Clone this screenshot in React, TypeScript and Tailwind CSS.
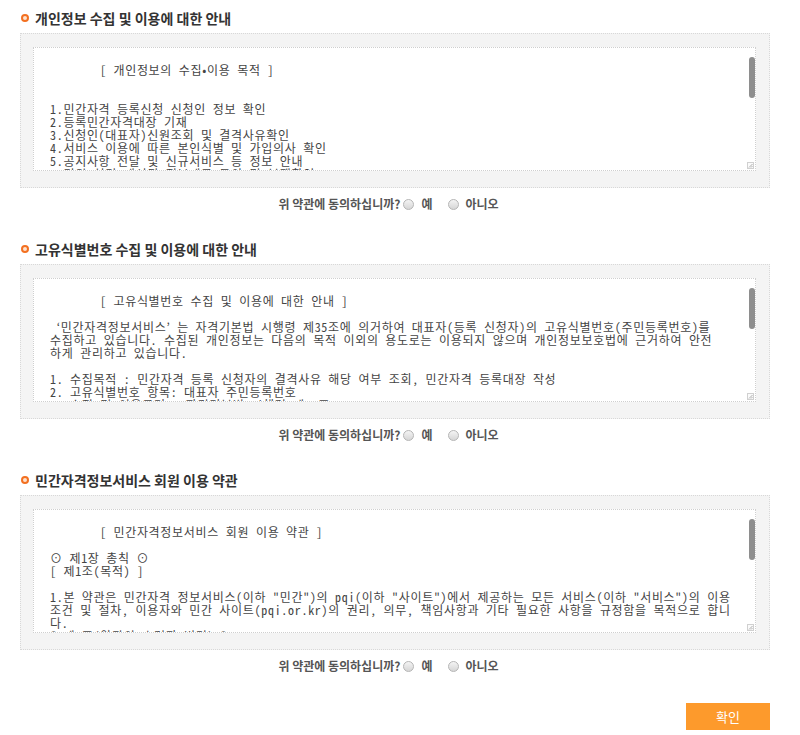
import React from "react";

const mono = {
  fontFamily: '"Noto Sans Mono CJK KR", "Noto Sans CJK KR", monospace',
};

function Bullet() {
  return (
    <span className="inline-block w-[8px] h-[8px] rounded-full border-[2px] border-[#f37021] bg-[#fde3d0] mr-[6px] shrink-0" />
  );
}

function Radio() {
  return (
    <span className="inline-block w-[11px] h-[11px] rounded-full border border-[#b5b5b5] bg-gradient-to-b from-[#f4f4f4] to-[#d6d6d6]" />
  );
}

type Line = { t: string; indent?: boolean };

function TermsBox({ lines }: { lines: Line[] }) {
  return (
    <div className="border border-dotted border-[#d8d8d8] bg-[#f4f4f4] pt-[13px] pb-[16px] pl-[12px] pr-[13px]">
      <div className="relative h-[124px] overflow-hidden border border-dotted border-[#cfcfcf] bg-white">
        <div
          className="pt-[15px] pl-[16px] text-[12px] leading-[13px] tracking-[0.7px] text-[#444444] whitespace-pre"
          style={mono}
        >
          {lines.map((l, i) => (
            <div key={i} className={l.indent ? "pl-[50px] h-[13px]" : "h-[13px]"}>
              {l.t}
            </div>
          ))}
        </div>
        <div className="absolute right-0 top-[9px] w-[6px] h-[41px] rounded-[3px] bg-[#8e8e8e]" />
        <svg
          className="absolute right-[1px] bottom-[1px]"
          width="7"
          height="7"
          viewBox="0 0 7 7"
        >
          <rect x="0.5" y="0.5" width="6" height="6" fill="#fafafa" stroke="#d0d0d0" />
          <path d="M2 5.5 L5.5 2 M4 5.5 L5.5 4" stroke="#9a9a9a" strokeWidth="0.8" />
        </svg>
      </div>
    </div>
  );
}

function Agree() {
  return (
    <div
      className="mt-[8px] h-[16px] flex items-center justify-center pr-[13px] text-[12px] font-bold text-[#555555]"
      style={{ fontFamily: '"Noto Sans CJK KR", "Noto Sans", sans-serif' }}
    >
      <span className="mr-[3px]">위 약관에 동의하십니까?</span>
      <Radio />
      <span className="ml-[7px] mr-[16px]">예</span>
      <Radio />
      <span className="ml-[6px]">아니오</span>
    </div>
  );
}

function Heading({ title }: { title: string }) {
  return (
    <div
      className="h-[33px] pt-[3px] flex items-center pl-[1px] text-[14px] font-bold text-[#333333]"
      style={{ fontFamily: '"Noto Sans CJK KR", "Noto Sans", sans-serif' }}
    >
      <Bullet />
      <span>{title}</span>
    </div>
  );
}

const s1: Line[] = [
  { t: "[ 개인정보의 수집•이용 목적 ]", indent: true },
  { t: "" },
  { t: "" },
  { t: "1.민간자격 등록신청 신청인 정보 확인" },
  { t: "2.등록민간자격대장 기재" },
  { t: "3.신청인(대표자)신원조회 및 결격사유확인" },
  { t: "4.서비스 이용에 따른 본인식별 및 가입의사 확인" },
  { t: "5.공지사항 전달 및 신규서비스 등 정보 안내" },
  { t: "6.민원 처리 개선된 정보제공 동의 및 분쟁확인" },
];

const s2: Line[] = [
  { t: "[ 고유식별번호 수집 및 이용에 대한 안내 ]", indent: true },
  { t: "" },
  { t: " ‘민간자격정보서비스’ 는 자격기본법 시행령 제35조에 의거하여 대표자(등록 신청자)의 고유식별번호(주민등록번호)를" },
  { t: "수집하고 있습니다. 수집된 개인정보는 다음의 목적 이외의 용도로는 이용되지 않으며 개인정보보호법에 근거하여 안전" },
  { t: "하게 관리하고 있습니다." },
  { t: "" },
  { t: "1. 수집목적 : 민간자격 등록 신청자의 결격사유 해당 여부 조회, 민간자격 등록대장 작성" },
  { t: "2. 고유식별번호 항목: 대표자 주민등록번호" },
  { t: "3. 수집 및 이용근거 : 자격기본법 시행령 제35조" },
];

const s3: Line[] = [
  { t: "[ 민간자격정보서비스 회원 이용 약관 ]", indent: true },
  { t: "" },
  { t: "⊙ 제1장 총칙 ⊙" },
  { t: "[ 제1조(목적) ]" },
  { t: "" },
  { t: '1.본 약관은 민간자격 정보서비스(이하 "민간")의 pqi(이하 "사이트")에서 제공하는 모든 서비스(이하 "서비스")의 이용' },
  { t: "조건 및 절차, 이용자와 민간 사이트(pqi.or.kr)의 권리, 의무, 책임사항과 기타 필요한 사항을 규정함을 목적으로 합니" },
  { t: "다." },
  { t: "[ 제2조(약관의 효력과 변경) ]" },
];

export default function App() {
  return (
    <div className="w-[800px] h-[735px] bg-white px-[20px]">
      <div className="w-[750px]">
        <Heading title="개인정보 수집 및 이용에 대한 안내" />
        <TermsBox lines={s1} />
        <Agree />

        <div className="mt-[19px]">
          <Heading title="고유식별번호 수집 및 이용에 대한 안내" />
          <TermsBox lines={s2} />
          <Agree />
        </div>

        <div className="mt-[19px]">
          <Heading title="민간자격정보서비스 회원 이용 약관" />
          <TermsBox lines={s3} />
          <Agree />
        </div>

        <div className="mt-[29px] flex justify-end">
          <button
            className="w-[84px] h-[27px] bg-[#fd9a2c] text-white text-[13px]"
            style={{ fontFamily: '"Noto Sans CJK KR", "Noto Sans", sans-serif' }}
          >
            확인
          </button>
        </div>
      </div>
    </div>
  );
}
